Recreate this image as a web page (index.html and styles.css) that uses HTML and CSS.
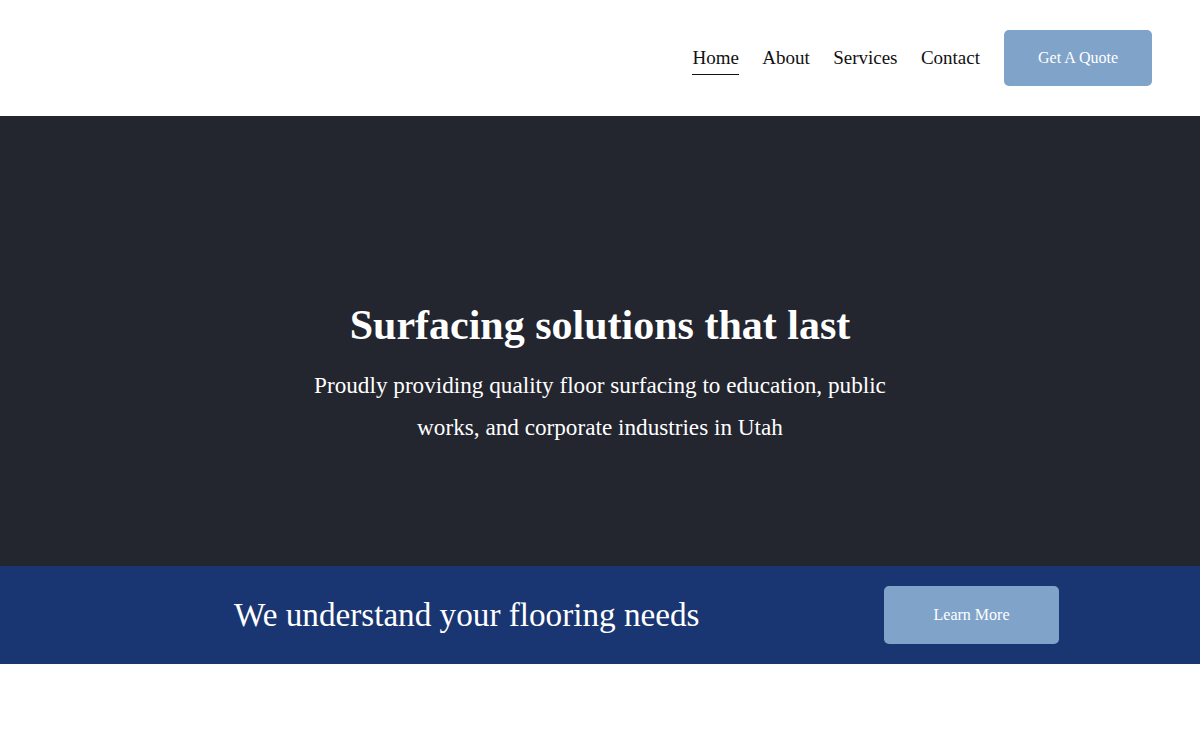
FILE: index.html
```html
<!DOCTYPE html>
<html lang="en">
<head>
<meta charset="utf-8">
<title>Surfacing solutions that last</title>
<link rel="stylesheet" href="styles.css">
</head>
<body>
<header class="site-header">
  <nav class="nav">
    <a class="nav-link active" href="#">Home</a>
    <a class="nav-link" href="#">About</a>
    <a class="nav-link" href="#">Services</a>
    <a class="nav-link" href="#">Contact</a>
  </nav>
  <a class="btn btn-quote" href="#">Get A Quote</a>
</header>
<section class="hero">
  <h1 class="hero-title">Surfacing solutions that last</h1>
  <p class="hero-text">Proudly providing quality floor surfacing to education, public works, and corporate industries in Utah</p>
</section>
<section class="band">
  <h2 class="band-title">We understand your flooring needs</h2>
  <a class="btn btn-learn" href="#">Learn More</a>
</section>
</body>
</html>
```
FILE: styles.css
```css
* { box-sizing: border-box; }
html, body { margin: 0; padding: 0; }
body {
  font-family: "Liberation Serif", "Times New Roman", serif;
  background: #ffffff;
  color: #111;
}
a { text-decoration: none; }

.site-header {
  height: 116px;
  display: flex;
  align-items: center;
  justify-content: flex-end;
  padding: 0 48px;
  gap: 24px;
}
.nav {
  display: flex;
  gap: 23.4px;
  align-items: center;
}
.nav-link {
  font-size: 19px;
  color: #111;
  line-height: 24px;
  padding-bottom: 4px;
  border-bottom: 1.5px solid transparent;
  margin-top: 5px;
}
.nav-link.active { border-bottom-color: #111; }

.btn {
  display: inline-flex;
  align-items: center;
  justify-content: center;
  color: #fff;
  background: #7fa3c9;
  border-radius: 5px;
  font-size: 16px;
}
.btn-quote { width: 148px; height: 56px; }

.hero {
  height: 450px;
  background: #23252f;
  color: #fff;
  display: flex;
  flex-direction: column;
  align-items: center;
  justify-content: center;
  text-align: center;
  padding-top: 66px;
}
.hero-title {
  font-size: 42px;
  font-weight: bold;
  margin: 0 0 14px;
  line-height: 1.2;
}
.hero-text {
  font-size: 23.2px;
  line-height: 42px;
  margin: 0;
  max-width: 600px;
}

.band {
  height: 98px;
  background: #1a3672;
  display: flex;
  align-items: center;
  justify-content: space-between;
  padding: 0 141px 0 234px;
}
.band-title {
  font-size: 33.2px;
  font-weight: normal;
  color: #fff;
  margin: 0;
}
.btn-learn { width: 175px; height: 58px; }
```
